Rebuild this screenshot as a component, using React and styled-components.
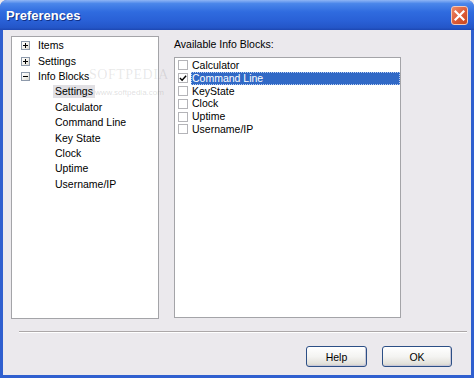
import React from "react";
import styled, { createGlobalStyle } from "styled-components";

const treeItems = [
  { label: "Items", level: 0, expander: "plus" },
  { label: "Settings", level: 0, expander: "plus" },
  { label: "Info Blocks", level: 0, expander: "minus" },
  { label: "Settings", level: 1, selected: true },
  { label: "Calculator", level: 1 },
  { label: "Command Line", level: 1 },
  { label: "Key State", level: 1 },
  { label: "Clock", level: 1 },
  { label: "Uptime", level: 1 },
  { label: "Username/IP", level: 1 },
];

const blocks = [
  { label: "Calculator", checked: false },
  { label: "Command Line", checked: true, active: true },
  { label: "KeyState", checked: false },
  { label: "Clock", checked: false },
  { label: "Uptime", checked: false },
  { label: "Username/IP", checked: false },
];

function Expander({ kind }) {
  return (
    <ExpBox>
      <svg width="9" height="9" viewBox="0 0 9 9">
        <rect x="2" y="4" width="5" height="1" fill="#000" />
        {kind === "plus" && <rect x="4" y="2" width="1" height="5" fill="#000" />}
      </svg>
    </ExpBox>
  );
}

function App() {
  return (
    <>
      <GlobalStyle />
      <Window>
        <TitleBar>
          <Title>Preferences</Title>
          <CloseButton>
            <svg width="11" height="11" viewBox="0 0 11 11">
              <path d="M1.5 1.5 L9.5 9.5 M9.5 1.5 L1.5 9.5" stroke="#fff" strokeWidth="2.2" strokeLinecap="square" />
            </svg>
          </CloseButton>
        </TitleBar>
        <Body>
          <Content>
            <TreePanel>
              {treeItems.map((item, i) => (
                <TreeRow key={i} $level={item.level}>
                  {item.expander && <Expander kind={item.expander} />}
                  <TreeLabel $selected={item.selected}>{item.label}</TreeLabel>
                </TreeRow>
              ))}
            </TreePanel>
            <RightColumn>
              <Caption>Available Info Blocks:</Caption>
              <ListBox>
                {blocks.map((b, i) => (
                  <ListRow key={i}>
                    <CheckBox>
                      {b.checked && (
                        <svg width="9" height="9" viewBox="0 0 9 9">
                          <path d="M1 4 L3.5 6.5 L8 1.5" stroke="#000" strokeWidth="1.6" fill="none" />
                        </svg>
                      )}
                    </CheckBox>
                    <ListLabel $active={b.active}>{b.label}</ListLabel>
                  </ListRow>
                ))}
              </ListBox>
            </RightColumn>
          </Content>
          <Separator />
          <ButtonRow>
            <Button $width={61}>Help</Button>
            <Button $width={70}>OK</Button>
          </ButtonRow>
          <Watermark>SOFTPEDIA</Watermark>
          <WatermarkUrl>www.softpedia.com</WatermarkUrl>
        </Body>
      </Window>
    </>
  );
}

const GlobalStyle = createGlobalStyle`
  html, body {
    margin: 0;
    padding: 0;
    background: #ebe9ed;
  }
  body {
    font-family: "Liberation Sans", Arial, sans-serif;
    font-size: 10.5px;
    color: #000;
  }
`;

const Window = styled.div`
  width: 474px;
  height: 378px;
  display: flex;
  flex-direction: column;
  background: #2f5fcf;
  border-radius: 7px 7px 0 0;
  overflow: hidden;
`;

const TitleBar = styled.div`
  height: 30px;
  flex: none;
  display: flex;
  align-items: center;
  justify-content: space-between;
  padding: 0 6px 0 6px;
  box-sizing: border-box;
  background: linear-gradient(
    to bottom,
    #8fb5f5 0%,
    #4a86ea 12%,
    #2f6bdf 40%,
    #2960d6 70%,
    #2456c8 92%,
    #1d47b2 100%
  );
`;

const Title = styled.div`
  color: #fff;
  font-weight: bold;
  font-size: 13px;
  text-shadow: 1px 1px 0 #0f2f86;
  padding-top: 1px;
`;

const CloseButton = styled.div`
  width: 17px;
  height: 19px;
  margin-top: 1px;
  box-sizing: border-box;
  border: 1px solid #f3c8b8;
  border-radius: 3px;
  background: linear-gradient(135deg, #ec8a68 0%, #dc5a36 55%, #c8471f 100%);
  display: flex;
  align-items: center;
  justify-content: center;
`;

const Body = styled.div`
  position: relative;
  flex: 1;
  margin: 0 3px 3px 3px;
  background: #ebe9ed;
  display: flex;
  flex-direction: column;
  padding: 6px 0 0 8px;
`;

const Content = styled.div`
  display: flex;
  gap: 15px;
  align-items: flex-start;
`;

const TreePanel = styled.div`
  width: 148px;
  height: 283px;
  box-sizing: border-box;
  background: #fff;
  border: 1px solid #a4a4a8;
  padding-top: 1px;
`;

const TreeRow = styled.div`
  height: 15.4px;
  display: flex;
  align-items: center;
  padding-left: ${(p) => (p.$level === 0 ? 9 : 41)}px;
`;

const ExpBox = styled.div`
  width: 9px;
  height: 9px;
  box-sizing: border-box;
  border: 1px solid #8e9aab;
  background: linear-gradient(135deg, #fff 0%, #f0efea 60%, #d8d6cc 100%);
  display: flex;
  align-items: center;
  justify-content: center;
  margin-right: 6px;
  svg {
    margin: -1px;
  }
`;

const TreeLabel = styled.span`
  padding: 0 2px;
  line-height: 13px;
  background: ${(p) => (p.$selected ? "#e1e0e4" : "transparent")};
`;

const RightColumn = styled.div`
  display: flex;
  flex-direction: column;
`;

const Caption = styled.div`
  height: 16px;
  line-height: 16px;
  margin-bottom: 5px;
`;

const ListBox = styled.div`
  width: 227px;
  height: 261px;
  box-sizing: border-box;
  background: #fff;
  border: 1px solid #a4a4a8;
  padding-top: 1px;
`;

const ListRow = styled.div`
  height: 12.8px;
  display: flex;
  align-items: center;
  padding-left: 3px;
`;

const CheckBox = styled.div`
  width: 10px;
  height: 10px;
  box-sizing: border-box;
  border: 1px solid #b4b4b8;
  background: #fff;
  display: flex;
  align-items: center;
  justify-content: center;
  margin-right: 3px;
`;

const ListLabel = styled.span`
  flex: 1;
  height: 12.8px;
  line-height: 12px;
  padding-left: 1px;
  box-sizing: border-box;
  color: ${(p) => (p.$active ? "#fff" : "#000")};
  background: ${(p) => (p.$active ? "#3169c6" : "transparent")};
  outline: ${(p) => (p.$active ? "1px dotted #b9cdf0" : "none")};
  outline-offset: -1px;
`;

const Separator = styled.div`
  height: 0;
  margin: 12px 4px 0 8px;
  border-top: 1px solid #aca8a9;
  border-bottom: 1px solid #fff;
`;

const ButtonRow = styled.div`
  display: flex;
  justify-content: flex-end;
  gap: 15px;
  margin-top: 13px;
  padding-right: 19px;
`;

const Button = styled.div`
  width: ${(p) => p.$width}px;
  height: 21px;
  box-sizing: border-box;
  border: 1px solid #2c4f86;
  border-radius: 3px;
  background: linear-gradient(to bottom, #ffffff 0%, #f4f4f2 50%, #e4e3dd 85%, #d3d2cc 100%);
  box-shadow: inset -1px -1px 0 #c9c8d8;
  display: flex;
  align-items: center;
  justify-content: center;
`;

const Watermark = styled.div`
  position: absolute;
  left: 86px;
  top: 37px;
  font-family: "Liberation Serif", serif;
  font-size: 14px;
  letter-spacing: 0.5px;
  color: rgba(110, 110, 110, 0.16);
  pointer-events: none;
`;

const WatermarkUrl = styled.div`
  position: absolute;
  left: 92px;
  top: 58px;
  font-size: 8px;
  color: rgba(110, 110, 110, 0.22);
  pointer-events: none;
`;

export default App;
